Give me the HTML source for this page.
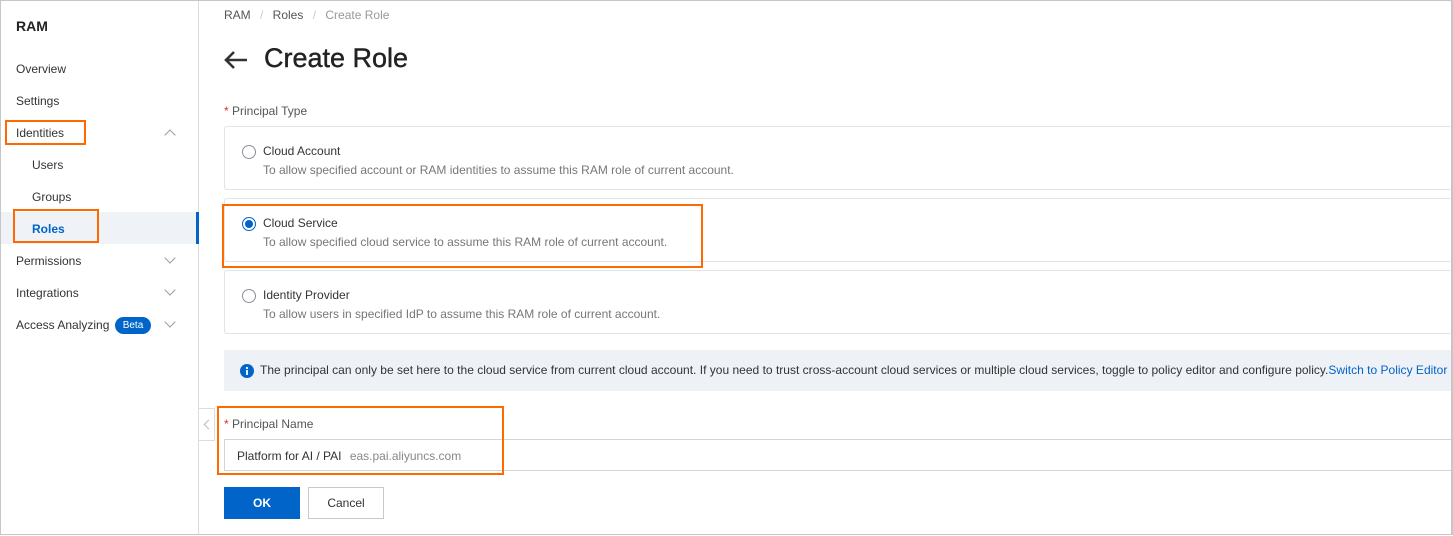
<!DOCTYPE html>
<html><head><style>
*{box-sizing:border-box;margin:0;padding:0}
body{width:1453px;height:536px;overflow:hidden;background:#fff;font-family:"Liberation Sans",sans-serif;color:#333;position:relative}
.frame{position:absolute;left:0;top:0;width:1453px;height:535px;border:1px solid #c6c6c6;border-right:2px solid #c6c6c6;z-index:5;pointer-events:none}
.side{position:absolute;left:1px;top:1px;width:198px;height:533px;border-right:1px solid #dcdcdc;background:#fff}
.side div{position:absolute;font-size:12px;color:#333}
.abs{position:absolute}
.chev{position:absolute;width:8px;height:8px;border-left:1.5px solid #999;border-top:1.5px solid #999}
.card{position:absolute;left:224px;width:1228px;height:64px;border:1px solid #e3e3e3;border-radius:3px;border-right:none}
.radio{position:absolute;left:17px;top:18px;width:14px;height:14px;border:1px solid #8a8f99;border-radius:50%;background:#fff}
.t1{position:absolute;left:38px;top:17px;font-size:12px;color:#333}
.t2{position:absolute;left:38px;top:36px;font-size:12px;color:#777}
.orange{position:absolute;border:2px solid #ff6a00}
</style></head><body>
<div class="frame"></div>
<div class="side">
<div style="left:15px;top:17px;font-size:14px;font-weight:bold;color:#222">RAM</div>
<div style="left:15px;top:61px">Overview</div>
<div style="left:15px;top:93px">Settings</div>
<div style="left:15px;top:125px">Identities</div>
<span class="chev" style="left:165px;top:130px;transform:rotate(45deg)"></span>
<div style="left:31px;top:157px">Users</div>
<div style="left:31px;top:189px">Groups</div>
<div style="left:0;top:211px;width:198px;height:32px;background:#eff3f8;border-right:3px solid #0064c8"></div>
<div style="left:31px;top:221px;color:#0064c8;font-weight:bold">Roles</div>
<div style="left:15px;top:253px">Permissions</div>
<span class="chev" style="left:165px;top:253px;transform:rotate(225deg)"></span>
<div style="left:15px;top:285px">Integrations</div>
<span class="chev" style="left:165px;top:285px;transform:rotate(225deg)"></span>
<div style="left:15px;top:317px">Access Analyzing</div>
<div style="left:114px;top:316px;width:36px;height:17px;border-radius:9px;background:#0064c8;color:#fff;font-size:10px;text-align:center;line-height:17px">Beta</div>
<span class="chev" style="left:165px;top:317px;transform:rotate(225deg)"></span>
</div>
<div class="orange" style="left:5px;top:120px;width:81px;height:25px"></div>
<div class="orange" style="left:13px;top:209px;width:86px;height:34px"></div>

<div class="abs" style="left:224px;top:8px;font-size:12px;color:#555">RAM <span style="color:#ccc;margin:0 6px">/</span> Roles <span style="color:#ccc;margin:0 6px">/</span> <span style="color:#999">Create Role</span></div>
<svg class="abs" style="left:223px;top:49px" width="26" height="22" viewBox="0 0 26 22"><path d="M24 11H3M11 3L3 11l8 8" fill="none" stroke="#333" stroke-width="2.6"/></svg>
<div class="abs" style="left:264px;top:43px;font-size:27px;color:#222;-webkit-text-stroke:0.4px #222">Create Role</div>
<div class="abs" style="left:224px;top:104px;font-size:12px;color:#555"><span style="color:#d93026">*</span> Principal Type</div>

<div class="card" style="top:126px"><div class="radio"></div><div class="t1">Cloud Account</div><div class="t2">To allow specified account or RAM identities to assume this RAM role of current account.</div></div>
<div class="card" style="top:198px"><div class="radio" style="border-color:#0064c8"><div style="position:absolute;left:2px;top:2px;width:8px;height:8px;border-radius:50%;background:#0064c8"></div></div><div class="t1">Cloud Service</div><div class="t2">To allow specified cloud service to assume this RAM role of current account.</div></div>
<div class="card" style="top:270px"><div class="radio"></div><div class="t1">Identity Provider</div><div class="t2">To allow users in specified IdP to assume this RAM role of current account.</div></div>
<div class="orange" style="left:222px;top:204px;width:481px;height:64px"></div>

<div class="abs" style="left:224px;top:350px;width:1228px;height:41px;background:#eef1f6"></div>
<svg class="abs" style="left:240px;top:364px" width="14" height="14" viewBox="0 0 14 14"><circle cx="7" cy="7" r="7" fill="#0064c8"/><rect x="6.1" y="6" width="1.8" height="5" fill="#fff"/><circle cx="7" cy="4" r="1.1" fill="#fff"/></svg>
<div class="abs" style="left:260px;top:363px;font-size:12px;color:#333;white-space:nowrap;letter-spacing:0.01px">The principal can only be set here to the cloud service from current cloud account. If you need to trust cross-account cloud services or multiple cloud services, toggle to policy editor and configure policy.<span style="color:#0064c8">Switch to Policy Editor</span></div>

<div class="abs" style="left:199px;top:408px;width:16px;height:33px;background:#fff;border:1px solid #ddd;border-left:none"></div>
<span class="chev" style="left:205px;top:421px;width:7px;height:7px;transform:rotate(-45deg);border-color:#bbb"></span>
<div class="abs" style="left:224px;top:417px;font-size:12px;color:#555"><span style="color:#d93026">*</span> Principal Name</div>
<div class="abs" style="left:224px;top:439px;width:1228px;height:32px;border:1px solid #d4d4d4;border-right:none;background:#fff"></div>
<div class="abs" style="left:237px;top:449px;font-size:12px;color:#333">Platform for AI / PAI <span style="color:#888;margin-left:5px">eas.pai.aliyuncs.com</span></div>
<div class="orange" style="left:217px;top:406px;width:287px;height:69px"></div>

<div class="abs" style="left:224px;top:487px;width:76px;height:32px;background:#0064c8;color:#fff;font-size:12px;font-weight:bold;text-align:center;line-height:32px">OK</div>
<div class="abs" style="left:308px;top:487px;width:76px;height:32px;border:1px solid #c8c8c8;background:#fff;color:#333;font-size:12px;text-align:center;line-height:30px">Cancel</div>
</body></html>
